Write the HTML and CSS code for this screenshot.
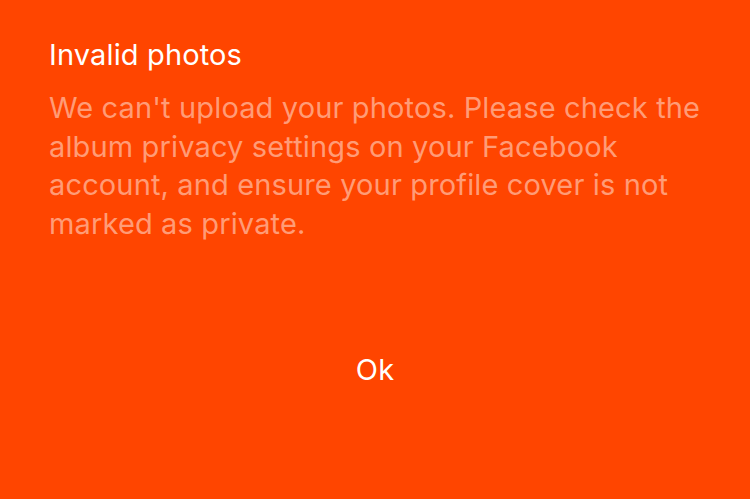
FILE: index.html
```
<!DOCTYPE html>
<html>
<head>
<meta charset="utf-8">
<link rel="stylesheet" href="styles.css">
</head>
<body>
<div class="dialog">
  <h1 class="title">Invalid photos</h1>
  <p class="message">We can't upload your photos. Please check the album privacy settings on your Facebook account, and ensure your profile cover is not marked as private.</p>
  <div class="actions">
    <button class="ok">Ok</button>
  </div>
</div>
</body>
</html>
```
FILE: styles.css
```
html, body {
  margin: 0;
  padding: 0;
  background: #ff4500;
  width: 750px;
  height: 499px;
  overflow: hidden;
}
.dialog {
  font-family: Inter, "Liberation Sans", sans-serif;
  padding: 36px 49px 0 49px;
  display: flex;
  flex-direction: column;
  letter-spacing: 0.14px;
}
.title {
  margin: 0;
  font-size: 29px;
  font-weight: 400;
  line-height: 38px;
  color: #ffffff;
}
.message {
  margin: 15px 0 0 0;
  font-size: 29px;
  line-height: 38.5px;
  color: rgba(255, 255, 255, 0.47);
  width: 660px;
}
.actions {
  display: flex;
  justify-content: center;
  margin-top: 108px;
}
.ok {
  background: none;
  border: none;
  padding: 0;
  font-family: inherit;
  letter-spacing: inherit;
  font-size: 29px;
  line-height: 38px;
  color: #ffffff;
}
```
